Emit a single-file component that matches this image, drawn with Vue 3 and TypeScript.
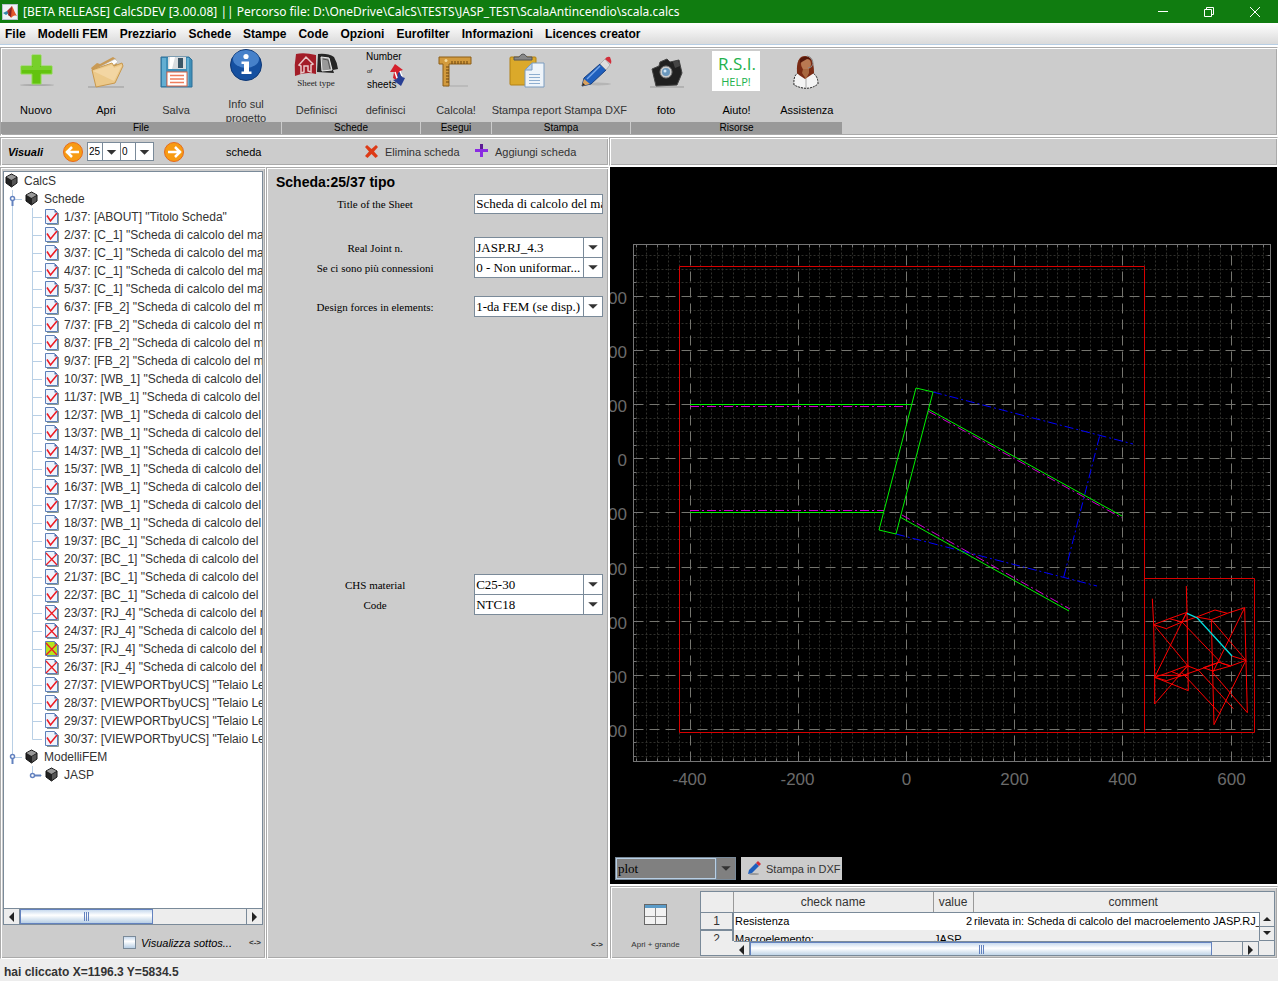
<script setup lang="ts">
import { ref } from 'vue'

interface Tool { label: string; icon: string; dim?: boolean; tall?: boolean }
interface Group { name: string; width: string; tools: Tool[] }
interface Row { level: number; text: string; icon: 'cube' | 'ok' | 'bad' | 'current'; handle?: 'open' | 'closed'; last?: boolean; root?: boolean }

const menus = ['File', 'Modelli FEM', 'Prezziario', 'Schede', 'Stampe', 'Code', 'Opzioni', 'Eurofilter', 'Informazioni', 'Licences creator']

const groups: Group[] = [
  { name: 'File', width: 'w4', tools: [
    { label: 'Nuovo', icon: 'new' }, { label: 'Apri', icon: 'open' },
    { label: 'Salva', icon: 'save', dim: true }, { label: 'Info sul progetto', icon: 'info', dim: true, tall: true } ] },
  { name: 'Schede', width: 'w2', tools: [
    { label: 'Definisci', icon: 'type', dim: true }, { label: 'definisci', icon: 'number', dim: true } ] },
  { name: 'Esegui', width: 'w1', tools: [{ label: 'Calcola!', icon: 'ruler', dim: true }] },
  { name: 'Stampa', width: 'w2', tools: [
    { label: 'Stampa report', icon: 'report', dim: true }, { label: 'Stampa DXF', icon: 'pencil', dim: true } ] },
  { name: 'Risorse', width: 'w3', tools: [
    { label: 'foto', icon: 'camera' }, { label: 'Aiuto!', icon: 'help' }, { label: 'Assistenza', icon: 'support' } ] },
]

const code = (n: number): string =>
  n === 1 ? 'ABOUT' : n <= 5 ? 'C_1' : n <= 9 ? 'FB_2' : n <= 18 ? 'WB_1' : n <= 22 ? 'BC_1' : n <= 26 ? 'RJ_4' : 'VIEWPORTbyUCS'
const caption = (n: number): string =>
  n === 1 ? '"Titolo Scheda"' : n <= 26 ? '"Scheda di calcolo del macroelemento"' : '"Telaio Lettura"'
const failed = [20, 23, 24, 26]

const rows: Row[] = [
  { level: 0, text: 'CalcS', icon: 'cube' },
  { level: 1, text: 'Schede', icon: 'cube', handle: 'open' },
  ...Array.from({ length: 30 }, (_, i): Row => {
    const n = i + 1
    return {
      level: 2,
      text: `${n}/37: [${code(n)}] ${caption(n)}`,
      icon: n === 25 ? 'current' : failed.includes(n) ? 'bad' : 'ok',
      last: n === 30,
      root: true,
    }
  }),
  { level: 1, text: 'ModelliFEM', icon: 'cube', handle: 'open', last: true },
  { level: 2, text: 'JASP', icon: 'cube', handle: 'closed', last: true },
]

const sheetNo = ref('25')
const viewNo = ref('0')
const title = ref('Scheda di calcolo del macroelemento')
const showSub = ref(false)

const fields = [
  { id: 'joint', label: 'Real Joint n.', value: 'JASP.RJ_4.3', gap: 'g-mid' },
  { id: 'conn', label: 'Se ci sono più connessioni', value: '0 - Non uniformar...', gap: '' },
  { id: 'forces', label: 'Design forces in elements:', value: '1-da FEM (se disp.)', gap: 'g-small' },
  { id: 'mat', label: 'CHS material', value: 'C25-30', gap: 'g-big' },
  { id: 'code', label: 'Code', value: 'NTC18', gap: '' },
]

const left = 633.5, right = 1270.5, top = 244.5, bottom = 761.5
const sx = (v: number): number => Math.round(906 + v * 0.541) + 0.5
const sy = (v: number): number => Math.floor(458.8 - v * 0.541) + 0.5
const majorX = [-400, -200, 0, 200, 400, 600]
const majorY = [300, 200, 100, 0, -100, -200, -300, -400, -500]
const minorX = Array.from({ length: 59 }, (_, i) => -500 + i * 20).filter(v => v % 200 !== 0 && sx(v) < right)
const minorY = Array.from({ length: 38 }, (_, i) => 375 - i * 25).filter(v => v % 100 !== 0 && sy(v) < bottom)
const frame: string[] = [
  '97,116 101,194 104,352 104,432 205,315', '199,78 201,157 205,392 104,352', '101,194 148,176 201,157', '101,194 139,206 186,186 201,157',
  '148,176 186,186 230,171 285,150 322,160 374,143 378,301 382,458 278,338', '230,171 274,179 322,160',
  '274,179 278,338 282,494 378,301', '101,194 204,318', '200,157 104,352', '186,186 305,310 332,318 378,301 335,288',
  '274,179 378,301', '374,143 278,338', '104,352 148,337 201,317 235,330 340,446', '104,352 140,362 186,347 235,330 297,307 332,318 278,333 250,323 297,307',
  '155,335 186,347 205,345', '186,338 299,460', '110,346 175,346 201,320',
]
</script>

<template>
  <div class="app">
    <header class="titlebar">
      <svg class="logo" width="16" height="16" viewBox="0 0 16 16">
        <rect width="16" height="16" fill="#fff" /><rect x=".5" y=".5" width="15" height="15" fill="#eef2f6" stroke="#b8c4d0" />
        <path d="M1 9 5 7 7 9 4 11Z" fill="#38a" /><path d="M5 7 10 2 9 8 7 11Z" fill="#a33" /><path d="M10 2c2 4 3 7 5 10-3-1-4 0-6 2-1-2-2-3-3-3 2-2 3-5 4-9Z" fill="#e2572b" /><path d="M10 2 9 13 6 11Z" fill="#822" />
      </svg>
      <h1>[BETA RELEASE] CalcSDEV [3.00.08] || Percorso file: D:\OneDrive\CalcS\TESTS\JASP_TEST\ScalaAntincendio\scala.calcs</h1>
      <div class="winbtns">
        <button aria-label="Minimize"><svg width="12" height="12" viewBox="0 0 12 12"><path d="M1 5.500h10" stroke="#fff" /></svg></button>
        <button aria-label="Restore"><svg width="12" height="12" viewBox="0 0 12 12" fill="none" stroke="#fff"><path d="M1.500 3.500h7v7h-7zM3.500 3.500v-2h7v7h-2" /></svg></button>
        <button aria-label="Close"><svg width="12" height="12" viewBox="0 0 12 12"><path d="M1 1l10 10M11 1L1 11" stroke="#fff" /></svg></button>
      </div>
    </header>

    <nav class="menubar">
      <button v-for="m in menus" :key="m">{{ m }}</button>
    </nav>

    <section class="panel ribbon">
      <div v-for="g in groups" :key="g.name" class="group" :class="g.width">
        <div class="tools">
          <button v-for="t in g.tools" :key="t.icon" class="tool" :class="{ dim: t.dim, tall: t.tall }">
            <svg width="48" height="40" viewBox="0 0 48 40">
              <g v-if="t.icon === 'new'">
                <ellipse cx="25" cy="34" rx="17" ry="1" fill="#aaa" />
                <path d="M20 4h9v11h11v8H29v10h-9V23H9v-8h11z" fill="#63c30f" stroke="#8fdc50" /><path d="M21 5h7v11h11v3H10v-3h11z" fill="#86d93c" opacity=".6" />
              </g>
              <g v-else-if="t.icon === 'open'">
                <path d="M6 36h36" stroke="#999" /><path d="M9 17l6-5 3 1 13-7 3 2 1 6-20 15z" fill="#c99a55" />
                <path d="M12 19 33 8l3 3-20 14z" fill="#fdfdfd" stroke="#bbb" stroke-width=".6" /><path d="M10 19l20-7 2 3 8-3 1 3-8 17-19 4z" fill="#ecc98a" stroke="#c8984e" /><path d="M11 20l19-6 2 3 8-3-8 16z" fill="#f6dcae" opacity=".7" />
              </g>
              <g v-else-if="t.icon === 'save'">
                <path d="M9 6h28l3 3v27H9z" fill="#3f8fb8" stroke="#2c6f98" /><path d="M10 7h4v28h-4zM35 7h2v28h-2z" fill="#63aed2" /><rect x="16" y="6" width="18" height="12" fill="#d9dde0" /><rect x="26" y="7" width="5" height="10" fill="#3a5566" /><path d="M18 6h5l-3 12h-3z" fill="#fff" />
                <rect x="15" y="21" width="20" height="14" fill="#fff" stroke="#e26746" /><path d="M18 24.500h14M18 28h14M18 31.500h14" stroke="#ef7d5c" stroke-width="1.500" />
              </g>
              <g v-else-if="t.icon === 'info'">
                <circle cx="24" cy="16" r="15.500" fill="#1550a0" stroke="#0d3775" /><ellipse cx="24" cy="10" rx="13" ry="9" fill="#5b96dc" opacity=".7" /><circle cx="24" cy="7.500" r="2.600" fill="#fff" /><path d="M19.500 12.500H27v10h2.500v2.500h-10v-2.500H22V15h-2.500z" fill="#fff" />
              </g>
              <g v-else-if="t.icon === 'type'">
                <path d="M3 3q8-2 20 1v19q-10-3-21 2-1-11 1-22z" fill="#a31d28" /><path d="M6 14l7-8 7 7-2 1v7l-3-1v-5h-4v6l-3 1v-7z" fill="none" stroke="#e8c8c8" stroke-width="1.500" /><path d="M25 3q10-1 16 3 3 5 4 12l-5 1 1 3-17-1z" fill="#262626" /><path d="M28 6l8 1 3 12-10 1z" fill="#999" stroke="#eee" /><path d="M30 8l5 1 2 9" stroke="#555" fill="none" />
                <text x="23" y="35" text-anchor="middle" class="serif8" fill="#222">Sheet type</text>
              </g>
              <g v-else-if="t.icon === 'number'">
                <text x="4" y="9" class="sans9">Number</text><text x="5" y="22" class="sans5">of</text><text x="5" y="37" class="sans9">sheets</text>
                <path d="M33 13l8 6-3 1 1 5h-3l-2 4-3-2 1-6h-4z" fill="#d5202c" /><path d="M36 22l3-2 1 6 3 1-4 8-8-6 4-1z" fill="#283f94" /><path d="M33 21l2 6M38 20l2 5" stroke="#fff" stroke-width="1.500" />
              </g>
              <g v-else-if="t.icon === 'ruler'">
                <path d="M14 35h22" stroke="#aaa" /><path d="M7 6h32v7H17v22h-6V13H7z" fill="#d29a3d" stroke="#8c5e18" /><path d="M20 10v3M23 10v3M26 10v3M29 10v3M32 10v3M35 10v3M14 16h3M14 19h3M14 22h3M14 25h3M14 28h3M14 31h3" stroke="#6a430c" /><circle cx="14" cy="9.500" r="1.500" fill="#f5d89a" />
              </g>
              <g v-else-if="t.icon === 'report'">
                <rect x="7" y="6" width="26" height="28" rx="1" fill="#dba92a" stroke="#b28115" /><path d="M11 9V6h5q4-6 8 0h5v3z" fill="#888" stroke="#555" />
                <path d="M29 12h12v24H22V19z" fill="#eef4fa" stroke="#7b9cc0" /><path d="M29 12v7h-7z" fill="#b9d0e8" stroke="#7b9cc0" /><path d="M26 23.500h11M26 26.500h11M26 29.500h11M26 32.500h11" stroke="#8eaed0" />
              </g>
              <g v-else-if="t.icon === 'pencil'">
                <ellipse cx="26" cy="33" rx="13" ry="1.500" fill="#b5b5b5" /><path d="M28 13l6 6-15 14-9 2 2-8z" fill="#1f5fbd" stroke="#163f80" /><path d="M28 15 15 28" stroke="#78a8ea" stroke-width="1.500" /><path d="M12 28l6 5-8 2z" fill="#d9a15e" /><path d="M10 35l1-3 2 2z" fill="#222" /><path d="M28 13l5-5 5 6-4 5z" fill="#ddd" stroke="#888" stroke-width=".5" /><path d="M33 8q2-3 5-2 2 4 1 7z" fill="#d22e3a" />
              </g>
              <g v-else-if="t.icon === 'camera'">
                <path d="M8 36h34" stroke="#999" /><path d="M10 18l7-3 1-4 7-3 3 3 9-2 3 13-5 12-21 1z" fill="#202020" stroke="#444" /><path d="M31 11l5-2 2 6-5 2z" fill="#444" /><circle cx="24" cy="21" r="6" fill="#ccc" stroke="#777" /><circle cx="24" cy="21" r="4" fill="#6b98bd" /><circle cx="23" cy="20" r="1.500" fill="#d2e8f8" />
              </g>
              <g v-else-if="t.icon === 'help'">
                <rect width="48" height="40" fill="#fff" /><text x="25" y="19" text-anchor="middle" class="rsi">R.S.I.</text><text x="24" y="35" text-anchor="middle" class="hlp">HELP!</text>
              </g>
              <g v-else>
                <path d="M11 34q-1-12 7-13h9q8 2 8 12-10 8-24 1z" fill="#f4f4f4" stroke="#222" stroke-dasharray="2 1" /><path d="M14 22q-1-17 8-17t9 17l-3 2-6 4-6-4z" fill="#7a2b14" /><ellipse cx="23" cy="13" rx="5" ry="6" fill="#b97952" /><path d="M20 18h6v4l-3 6-4-6z" fill="#a9683f" /><path d="M17 8q6-5 12 1l-5-1-7 4z" fill="#55180a" /><path d="M24 5q6 1 6 8-1 4-5 4" fill="none" stroke="#888" /><path d="M23 28v9" stroke="#aaa" />
              </g>
            </svg>
            <span>{{ t.label }}</span>
          </button>
        </div>
        <div class="gname">{{ g.name }}</div>
      </div>
    </section>

    <div class="bars">
      <section class="panel toolbar">
        <strong class="visuali">Visuali</strong>
        <button class="round" aria-label="Precedente"><svg width="20" height="20" viewBox="0 0 20 20"><circle cx="10" cy="10" r="9.500" fill="#f79b13" stroke="#e66a1c" /><path d="M3 10h13M9 5l-5 5 5 5" stroke="#fff" stroke-width="2.500" fill="none" /></svg></button>
        <span class="combo tiny first"><select v-model="sheetNo" aria-label="Numero scheda"><option>25</option></select><svg width="18" height="18" viewBox="0 0 18 18"><path d="M4 7h10l-5 5z" fill="#333" /></svg></span>
        <span class="combo tiny"><select v-model="viewNo" aria-label="Vista"><option>0</option></select><svg width="18" height="18" viewBox="0 0 18 18"><path d="M4 7h10l-5 5z" fill="#333" /></svg></span>
        <button class="round next" aria-label="Successiva"><svg width="20" height="20" viewBox="0 0 20 20"><circle cx="10" cy="10" r="9.500" fill="#f79b13" stroke="#e66a1c" /><path d="M17 10H4M11 5l5 5-5 5" stroke="#fff" stroke-width="2.500" fill="none" /></svg></button>
        <span class="mode">scheda</span>
        <button class="act del"><svg width="15" height="15" viewBox="0 0 15 15"><path d="M3 1l4.500 4L12 1l2 2-4 4.500 4 4.500-2.500 2-4-4-4 4L1 12l4-4.500L1 3z" fill="#dd3a16" /></svg>Elimina scheda</button>
        <button class="act"><svg width="15" height="15" viewBox="0 0 15 15"><path d="M6 0h3v5h5v3H9v5H6V8H1V5h5z" fill="#8a2be2" /><path d="M6 0h3v5H6z" fill="#5b1a94" /></svg>Aggiungi scheda</button>
      </section>
      <section class="panel"></section>
    </div>

    <main class="main">
      <section class="panel side">
        <div class="treebox">
          <ul class="tree">
            <li v-for="(r, i) in rows" :key="i">
              <svg v-if="r.level" class="guide" :width="r.level * 20" height="18" :viewBox="`0 0 ${r.level * 20} 18`" fill="none" stroke="#b8cfe5">
                <path v-if="r.level === 1" :d="r.last ? 'M8.500 0V8M8 9.500h10' : 'M8.500 0V18M8 9.500h10'" />
                <path v-else :d="(r.root ? 'M8.500 0V18' : '') + (r.last ? 'M28.500 0V9.500H38' : 'M28.500 0V18M28 9.500h10')" />
                <g v-if="r.handle === 'open'" stroke="#6382bf" stroke-width="2"><circle cx="8.500" cy="8.500" r="2" fill="#fff" stroke-width="1.500" /><path d="M8.500 11v5" /></g>
                <g v-if="r.handle === 'closed'" stroke="#6382bf" stroke-width="2"><circle cx="28.500" cy="9.500" r="2" fill="#fff" stroke-width="1.500" /><path d="M31 9.500h6" /></g>
              </svg>
              <svg v-if="r.icon === 'cube'" class="ico" width="14" height="16" viewBox="0 0 14 16">
                <path d="M6.500 1 12 4v6l-5.500 4L1 10V4z" fill="#222" stroke="#111" /><path d="M6.500 1.500 11.500 4 6.500 7 1.500 4z" fill="#999" /><path d="M7 7.500 11.500 5v5L7 13z" fill="#555" />
              </svg>
              <svg v-else class="ico" width="14" height="16" viewBox="0 0 14 16">
                <path d="M2 15.500h11.500V4" stroke="#8b9a94" fill="none" />
                <path d="M.5.500h9l3 3v11H.5z" :fill="r.icon === 'current' ? '#b5e61d' : '#eef4fd'" stroke="#5d7fb8" /><path d="M9.500.500v3h3z" fill="#4f6ea8" />
                <path v-if="r.icon === 'ok'" d="M2 6.500 5.500 12 12 4" fill="none" stroke="#ed1c24" stroke-width="1.600" />
                <path v-else d="M1 2l11 12M12 3L1 14" stroke="#ed1c24" stroke-width="1.300" />
              </svg>
              <span>{{ r.text }}</span>
            </li>
          </ul>
          <div class="hscroll">
            <button aria-label="Scorri a sinistra"><svg width="7" height="10" viewBox="0 0 7 10"><path d="M6 0v10L1 5z" fill="#222" /></svg></button>
            <div class="track"><div class="thumb half"><i></i></div></div>
            <button aria-label="Scorri a destra"><svg width="7" height="10" viewBox="0 0 7 10"><path d="M1 0v10l5-5z" fill="#222" /></svg></button>
          </div>
        </div>
        <div class="sidefoot">
          <label><input v-model="showSub" type="checkbox">Visualizza sottos...</label>
          <button class="resize">&lt;-&gt;</button>
        </div>
      </section>

      <section class="panel form">
        <h2>Scheda:25/37 tipo</h2>
        <div class="field">
          <label for="title">Title of the Sheet</label>
          <input id="title" v-model="title" type="text">
        </div>
        <div v-for="f in fields" :key="f.id" class="field" :class="f.gap">
          <label :for="f.id">{{ f.label }}</label>
          <span class="combo"><select :id="f.id"><option>{{ f.value }}</option></select><svg width="19" height="19" viewBox="0 0 19 19"><path d="M4.500 7h10l-5 5z" fill="#333" /></svg></span>
        </div>
        <button class="resize corner">&lt;-&gt;</button>
      </section>

      <div class="rightcol">
        <section class="plot">
          <svg class="canvas" viewBox="610 167 667 690">
            <g stroke="#30302c" stroke-dasharray="2 2">
              <line v-for="v in minorX" :key="'a' + v" :x1="sx(v)" :x2="sx(v)" :y1="top" :y2="bottom" />
              <line v-for="v in minorY" :key="'b' + v" :y1="sy(v)" :y2="sy(v)" :x1="left" :x2="right" />
            </g>
            <g stroke="#75756f" stroke-dasharray="10 6">
              <line v-for="v in majorX" :key="'c' + v" :x1="sx(v)" :x2="sx(v)" :y1="bottom" :y2="top" />
              <line v-for="v in majorY" :key="'d' + v" :y1="sy(v)" :y2="sy(v)" :x1="left" :x2="right" />
            </g>
            <g stroke="#757575" fill="none">
              <rect :x="left" :y="top" :width="right - left" :height="bottom - top" />
              <path v-for="v in minorX" :key="'e' + v" :d="`M${sx(v)} ${top}v3M${sx(v)} ${bottom}v-3`" />
              <path v-for="v in minorY" :key="'f' + v" :d="`M${left} ${sy(v)}h3M${right} ${sy(v)}h-3`" />
              <path v-for="v in majorX" :key="'g' + v" :d="`M${sx(v)} ${top}v6M${sx(v)} ${bottom}v-6`" />
              <path v-for="v in majorY" :key="'h' + v" :d="`M${left} ${sy(v)}h6M${right} ${sy(v)}h-6`" />
            </g>
            <g class="axis" fill="#6b6b6b">
              <text v-for="v in majorX" :key="'i' + v" :x="v < 0 ? sx(v) - 1 : sx(v)" y="785" text-anchor="middle">{{ v }}</text>
              <text v-for="v in majorY" :key="'j' + v" x="627" :y="sy(v) + 7" text-anchor="end">{{ v }}</text>
            </g>
            <g stroke="#d80000" fill="none"><path d="M679.500 266.500h465v466h-465zM1144.500 578.500h110v154h-110" /></g>
            <g stroke="#00f" fill="none" stroke-dasharray="9 3 2 3"><path d="M933 392l200 52" /><path d="M896 534l201 52" /><path d="M1099.500 436.500 1063.500 578" /></g>
            <g stroke="#d000d0" fill="none" stroke-dasharray="9 3 2 3"><path d="M690 406.500h217" /><path d="M690 510.500h194" /><path d="M928 411l194 107" /><path d="M902 515l168 94" /></g>
            <g stroke="#00f000" fill="none"><path d="M916 388l17 4-37 142-17-4zM690 404.500h221M690 512.500h194M928 409l194 107M900 517l169 94" /></g>
            <g transform="translate(1120 560) scale(.3333)" stroke="#f00" stroke-width="3" fill="none">
              <polyline v-for="p in frame" :key="p" :points="p" /><polyline points="201,160 232,174 336,288" stroke="#00e0e0" stroke-width="4" />
            </g>
          </svg>
          <div class="plotbar">
            <span class="combo dark"><select aria-label="Tipo di grafico"><option>plot</option></select><svg width="19" height="21" viewBox="0 0 19 21"><path d="M4.500 8h10l-5 5z" fill="#333" /></svg></span>
            <button class="dxf"><svg width="15" height="15" viewBox="0 0 15 15"><ellipse cx="7" cy="13" rx="5" ry="1" fill="#999" /><path d="M9 2l3 3-7 7-4 1 1-4z" fill="#1f5fbd" /><path d="M9 2l2-2 3 3-2 2z" fill="#d22e3a" /></svg>Stampa in DXF</button>
          </div>
        </section>
        <section class="panel checks">
          <button class="bigger">
            <svg width="24" height="22" viewBox="0 0 24 22"><rect x=".5" y=".5" width="22" height="20" fill="#f2f2f2" stroke="#666" /><rect x="1" y="1" width="21" height="3" fill="#5a9bc8" /><path d="M1 12.500h21M11.500 4v16" stroke="#888" /></svg>
            Apri + grande
          </button>
          <div class="sheet">
            <div class="tablebox">
              <table>
                <colgroup><col class="c0"><col class="c1"><col class="c2"><col></colgroup>
                <thead><tr><td></td><th scope="col">check name</th><th scope="col">value</th><th scope="col">comment</th></tr></thead>
                <tbody>
                  <tr><th scope="row">1</th><td>Resistenza</td><td class="num">2</td><td>rilevata in: Scheda di calcolo del macroelemento JASP.RJ_4.3</td></tr>
                  <tr class="alt"><th scope="row">2</th><td>Macroelemento:</td><td>JASP</td><td></td></tr>
                </tbody>
              </table>
            </div>
            <div class="vscroll">
              <button aria-label="Su"><svg width="8" height="4" viewBox="0 0 8 4"><path d="M0 4h8L4 0z" fill="#222" /></svg></button>
              <button aria-label="Giù"><svg width="8" height="4" viewBox="0 0 8 4"><path d="M0 0h8L4 4z" fill="#222" /></svg></button>
            </div>
            <div class="hscroll">
              <button aria-label="Scorri a sinistra"><svg width="7" height="10" viewBox="0 0 7 10"><path d="M6 0v10L1 5z" fill="#222" /></svg></button>
              <div class="track"><div class="thumb"><i></i></div></div>
              <button aria-label="Scorri a destra"><svg width="7" height="10" viewBox="0 0 7 10"><path d="M1 0v10l5-5z" fill="#222" /></svg></button>
            </div>
          </div>
        </section>
      </div>
    </main>

    <footer class="status">hai cliccato X=1196.3 Y=5834.5</footer>
  </div>
</template>

<style>
body { margin: 0; background: #ededed; }
</style>

<style scoped>
* { box-sizing: border-box; }
.app { display: flex; flex-direction: column; height: 100vh; min-height: 860px; background: #fff; color: #000; font: 11px/14px "Liberation Sans", Arial, sans-serif; overflow: hidden; }
button { font: inherit; color: inherit; border: 0; background: none; padding: 0; margin: 0; }
svg { display: block; flex: none; }
.panel { border: 1px solid; border-color: #aaa #fff #fff #aaa; box-shadow: inset 1px 1px #fff, inset -1px -1px #aaa; background: #ccc; min-width: 0; }

.titlebar { flex: none; height: 23px; display: flex; align-items: center; background: #107c10; color: #fff; padding-left: 2px; }
h1 { flex: 1; margin: 0 0 0 5px; font: 12px/23px "Noto Sans", "Open Sans", sans-serif; white-space: nowrap; overflow: hidden; }
.winbtns { display: flex; height: 21px; }
.winbtns button { width: 46px; display: flex; align-items: center; justify-content: center; }
.menubar { flex: none; height: 22px; margin-bottom: 2px; display: flex; gap: 12px; padding: 1px 0 0 5px; background: linear-gradient(#fff, #dadada); border-bottom: 1px solid #b8cfe5; font: bold 12px/20px "Liberation Sans", Arial, sans-serif; }

.ribbon { flex: none; height: 89px; margin-bottom: 1px; display: flex; gap: 1px; overflow: hidden; }
.group { display: flex; flex-direction: column; }
.w4 { width: 280px; } .w3 { width: 211px; } .w2 { width: 138px; } .w1 { width: 70px; }
.tools { display: flex; height: 74px; overflow: hidden; }
.tool { flex: 1 1 0; min-width: 0; display: flex; flex-direction: column; align-items: center; justify-content: flex-start; padding-top: 3px; gap: 12px; white-space: nowrap; }
.tool.tall { padding-top: 1px; gap: 8px; white-space: normal; }
.tool.tall span { width: 48px; }
.dim { color: #333; }
.gname { height: 12px; background: #999; text-align: center; font-size: 10px; line-height: 11px; }
.serif8 { font: 9px "Liberation Serif", serif; }
.sans9 { font: 10px "Liberation Sans", sans-serif; }
.sans5 { font: italic 6px "Liberation Sans", sans-serif; }
.rsi { font: 17px "Open Sans", sans-serif; fill: #22b14c; }
.hlp { font: 11px "Open Sans", sans-serif; fill: #22b14c; }

.bars { flex: none; height: 29px; margin-bottom: 1px; display: grid; grid-template-columns: minmax(0, 609fr) minmax(0, 669fr); }
.toolbar { display: flex; align-items: center; padding-left: 7px; overflow: hidden; white-space: nowrap; }
.visuali { width: 55px; font-style: italic; }
.round { width: 20px; height: 20px; }
.next { margin-left: 10px; }
.mode { width: 138px; margin-left: 42px; }
.act { display: flex; align-items: center; gap: 6px; color: #333; line-height: 16px; }
.del { width: 110px; }

.combo { display: grid; grid-template: "a" 1fr / 1fr; height: 21px; background: #fff; border: 1px solid #7a8a99; }
.combo select, .combo svg { grid-area: a; }
.combo select { appearance: none; min-width: 0; width: 100%; height: 100%; margin: 0; border: 0; border-radius: 0; padding: 0 20px 1px 1px; background: none; color: #000; font: 13px/17px "Liberation Serif", "Times New Roman", serif; }
.combo svg { justify-self: end; align-self: center; pointer-events: none; border-left: 1px solid #7a8a99; }
.tiny { width: 34px; height: 19px; }
.tiny.first { margin-left: 4px; margin-right: -1px; }
.tiny select { font: 10px/14px "Liberation Sans", sans-serif; padding: 0 0 0 1px; }

.main { flex: 1; min-height: 0; display: grid; grid-template-columns: minmax(0, 266fr) minmax(0, 343fr) minmax(0, 669fr); }
.side { display: flex; flex-direction: column; padding: 3px 2px 0; min-height: 0; margin-right: 0; }
.treebox { flex: 1; min-height: 0; display: flex; flex-direction: column; border: 1px solid #7a8a99; background: #fff; }
.tree { flex: 1; min-height: 0; margin: 0; padding: 0; list-style: none; overflow: hidden; font-size: 12px; color: #333; }
.tree li { display: flex; align-items: center; height: 18px; white-space: nowrap; }
.ico { margin: 0 5px 0 1px; }
.hscroll { flex: none; height: 16px; display: flex; border-top: 1px solid #7a8a99; background: #ededed; }
.hscroll button { width: 15px; display: flex; align-items: center; justify-content: center; }
.track { flex: 1; border: solid #7a8a99; border-width: 0 1px; }
.thumb { width: 94%; height: 100%; display: flex; align-items: center; justify-content: center; border: 1px solid #6382bf; background: linear-gradient(#c8daee, #fff 40%, #b8cfe5); }
.thumb.half { width: 59%; }
.thumb i { width: 5px; height: 9px; border: solid #6382bf; border-width: 0 1px; background: linear-gradient(90deg, transparent 1px, #6382bf 1px, #6382bf 2px, transparent 2px); }
.sidefoot { flex: none; height: 33px; display: flex; align-items: center; justify-content: flex-end; gap: 17px; padding: 2px 2px 0 0; }
.sidefoot label { display: flex; align-items: center; gap: 5px; font-style: italic; font-size: 11px; }
.sidefoot input { appearance: none; width: 13px; height: 13px; margin: 0; border: 1px solid #7a8a99; background: linear-gradient(#c8daee, #fff 40%, #b8cfe5); }
.resize { font-size: 8px; line-height: 10px; font-weight: bold; color: #333; }

.form { display: flex; flex-direction: column; padding: 4px 5px 8px 9px; }
h2 { margin: 0 0 2px; font-size: 14px; line-height: 20px; }
.field { display: grid; grid-template-columns: minmax(0, 197fr) minmax(0, 128fr); align-items: center; height: 20px; }
.field label { text-align: center; font: 11px/16px "Liberation Serif", serif; }
.field input { min-width: 0; height: 20px; border: 1px solid #7a8a99; padding: 0 0 0 1px; background: #fff; font: 13px/17px "Liberation Serif", "Times New Roman", serif; }
.g-mid { margin-top: 23px; } .g-small { margin-top: 19px; } .g-big { margin-top: 258px; }
.corner { margin: auto 0 0 auto; }

.rightcol { display: flex; flex-direction: column; min-width: 0; min-height: 0; padding: 0 0 0 1px; background: #fff; }
.plot { flex: 1; min-height: 0; display: flex; flex-direction: column; margin: 0 1px 2px 0; background: #000; overflow: hidden; }
.canvas { flex: 1 1 0; min-height: 0; width: 100%; overflow: hidden; }
.axis { font: 17px "Liberation Sans", Arial, sans-serif; }
.plotbar { flex: none; height: 27px; display: flex; gap: 5px; padding-left: 5px; }
.dark { width: 121px; height: 23px; background: #808080; }
.dark select { border: 1px solid #b8cfe5; width: calc(100% - 19px); padding: 0 0 0 1px; }
.dxf { height: 23px; width: 101px; display: flex; align-items: center; gap: 4px; padding-left: 6px; background: #ccc; color: #333; white-space: nowrap; }
.checks { flex: none; height: 73px; display: flex; padding: 4px 2px 2px 0; }
.bigger { flex: none; width: 89px; display: flex; flex-direction: column; align-items: center; justify-content: flex-end; gap: 14px; padding-bottom: 6px; font-size: 8px; line-height: 10px; color: #333; }
.sheet { flex: 1; min-width: 0; display: grid; grid-template: 20px 29px 16px / 33px minmax(0, 1fr) 15px; border: 1px solid #7a8a99; background: #ededed; overflow: hidden; }
.tablebox { grid-area: 1 / 1 / 3 / 4; overflow: hidden; }
table { table-layout: fixed; width: 593px; border-collapse: collapse; }
.c0 { width: 32px; } .c1 { width: 200px; } .c2 { width: 40px; }
th { font-weight: normal; font-size: 12px; color: #333; text-align: center; background: #ededed; }
td, th { padding: 0 1px; height: 18px; line-height: 16px; overflow: hidden; white-space: nowrap; }
thead td, thead th { height: 20px; border-right: 1px solid #999; border-bottom: 1px solid #7a8a99; }
tbody th { border-right: 2px solid #7a8a99; border-bottom: 2px solid #7a8a99; }
tbody td { background: #fff; }
tbody .alt td { background: #ededed; }
.num { text-align: right; }
.vscroll { grid-area: 2 / 3; display: flex; flex-direction: column; background: #ededed; border-left: 1px solid #7a8a99; }
.vscroll button { flex: 1; display: flex; align-items: center; justify-content: center; border-bottom: 1px solid #7a8a99; }
.sheet .hscroll { grid-area: 3 / 2; border-right: 1px solid #7a8a99; }
.status { flex: none; height: 22px; padding: 2px 4px; background: #ededed; color: #333; font: bold 12px/22px "Liberation Sans", Arial, sans-serif; }
</style>
